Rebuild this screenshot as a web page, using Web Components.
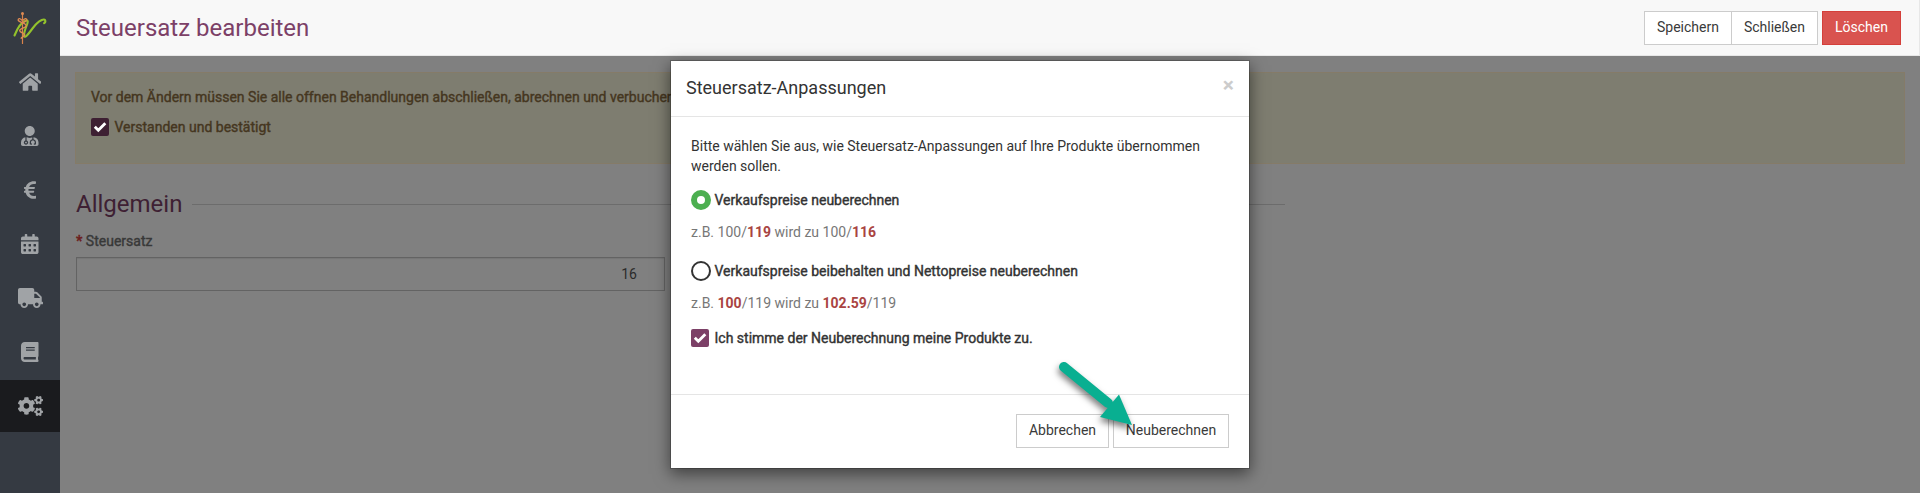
<!DOCTYPE html>
<html lang="de">
<head>
<meta charset="utf-8">
<title>Steuersatz bearbeiten</title>
<style>
html,body{margin:0;height:100%;overflow:hidden}
body{font:400 14px/20px Roboto,"Liberation Sans",sans-serif;color:#333;background:#808080}
</style>
</head>
<body>
<tax-app></tax-app>
<script>
const define = (name, html, setup) => customElements.define(name, class extends HTMLElement {
  constructor() {
    super();
    const t = document.createElement('template');
    t.innerHTML = html;
    this.attachShadow({mode: 'open'}).append(t.content.cloneNode(true));
  }
  connectedCallback() { if (setup) setup(this, this.shadowRoot); }
});

const smallGear = 'M512.1 191l-8.2 14.3c-3 5.3-9.4 7.5-15.1 5.4-11.8-4.4-22.6-10.7-32.1-18.6-4.6-3.8-5.8-10.5-2.8-15.7l8.2-14.3c-6.9-8-12.3-17.3-15.9-27.4h-16.5c-6 0-11.2-4.3-12.2-10.3-2-12-2.1-24.6 0-37.1 1-6 6.2-10.4 12.2-10.4h16.5c3.6-10.1 9-19.4 15.9-27.4l-8.2-14.3c-3-5.2-1.9-11.9 2.8-15.7 9.5-7.9 20.4-14.2 32.1-18.6 5.7-2.1 12.1.1 15.1 5.4l8.2 14.3c10.5-1.9 21.2-1.9 31.7 0L552 6.3c3-5.3 9.4-7.5 15.1-5.4 11.8 4.4 22.6 10.7 32.1 18.6 4.6 3.8 5.8 10.5 2.8 15.7l-8.2 14.3c6.9 8 12.3 17.3 15.9 27.4h16.5c6 0 11.2 4.3 12.2 10.3 2 12 2.1 24.6 0 37.1-1 6-6.2 10.4-12.2 10.4h-16.5c-3.6 10.1-9 19.4-15.9 27.4l8.2 14.3c3 5.2 1.9 11.9-2.8 15.7-9.5 7.9-20.4 14.2-32.1 18.6-5.7 2.1-12.1-.1-15.1-5.4l-8.2-14.3c-10.4 1.9-21.2 1.9-31.7 0zm-10.5-58.8c38.5 29.6 82.4-14.3 52.8-52.8-38.5-29.7-82.4 14.3-52.8 52.8z';
const day = (x, y) => `M${x} ${y+12}c0-6.6 5.4-12 12-12h40c6.6 0 12 5.4 12 12v40c0 6.6-5.4 12-12 12h-40c-6.6 0-12-5.4-12-12z`;
const icons = {
  home: [576, '<path d="M280.37 148.26L96 300.11V464a16 16 0 0 0 16 16l112.06-.29a16 16 0 0 0 15.92-16V368a16 16 0 0 1 16-16h64a16 16 0 0 1 16 16v95.64a16 16 0 0 0 16 16.05L464 480a16 16 0 0 0 16-16V300L295.67 148.26a12.19 12.19 0 0 0-15.3 0zM571.6 251.47L488 182.56V44.05a12 12 0 0 0-12-12h-56a12 12 0 0 0-12 12v72.61L318.47 43a48 48 0 0 0-61 0L4.34 251.47a12 12 0 0 0-1.6 16.9l25.5 31A12 12 0 0 0 45.15 301l235.22-193.74a12.19 12.19 0 0 1 15.3 0L530.9 301a12 12 0 0 0 16.9-1.6l25.5-31a12 12 0 0 0-1.7-16.93z"/>'],
  doctor: [448, '<path d="M224 256c70.7 0 128-57.3 128-128S294.7 0 224 0 96 57.3 96 128s57.3 128 128 128zM104 424c0 13.3 10.7 24 24 24s24-10.7 24-24-10.7-24-24-24-24 10.7-24 24zm216-135.4v49c36.5 7.4 64 39.8 64 78.4v41.7c0 7.6-5.4 14.2-12.9 15.7l-32.2 6.4c-4.3.9-8.5-1.9-9.4-6.3l-3.1-15.7c-.9-4.3 1.9-8.6 6.3-9.4l19.3-3.9V416c0-62.8-96-65.1-96 1.9v26.7l19.3 3.9c4.3.9 7.1 5.1 6.3 9.4l-3.1 15.7c-.9 4.3-5.1 7.1-9.4 6.3l-31.2-4.2c-7.9-1.1-13.8-7.8-13.8-15.9V416c0-38.6 27.5-70.9 64-78.4v-45.2c-2.2.7-4.4 1.1-6.6 1.9-18 6.3-37.3 9.8-57.4 9.8s-39.4-3.5-57.4-9.8c-7.4-2.6-14.9-4.2-22.6-5.2v81.6c23.1 6.9 40 28.1 40 53.4 0 30.9-25.1 56-56 56s-56-25.1-56-56c0-25.3 16.9-46.5 40-53.4v-80.4C48.5 301 0 355.8 0 422.4v44.8C0 491.9 20.1 512 44.8 512h358.4c24.7 0 44.8-20.1 44.8-44.8v-44.8c0-72-56.8-130.3-128-133.8z"/>'],
  euro: [320, '<path d="M310.706 413.765c-1.314-6.63-7.835-10.872-14.424-9.369-10.692 2.439-27.422 5.413-45.426 5.413-56.763 0-101.929-34.79-121.461-85.449h113.689a12 12 0 0 0 11.708-9.369l6.373-28.36c1.686-7.502-4.019-14.631-11.708-14.631H115.22c-1.21-14.328-1.414-28.287.137-42.245H261.95a12 12 0 0 0 11.723-9.434l6.512-29.755c1.638-7.484-4.061-14.566-11.723-14.566H130.184c20.633-44.991 62.69-75.03 117.619-75.03 14.486 0 28.564 2.25 37.851 4.145 6.216 1.268 12.347-2.498 14.002-8.623l11.991-44.368c1.822-6.741-2.465-13.616-9.326-14.917C290.217 34.912 270.71 32 249.635 32 152.451 32 74.03 92.252 45.075 176H12c-6.627 0-12 5.373-12 12v29.755c0 6.627 5.373 12 12 12h21.569c-1.009 13.607-1.181 29.287-.181 42.245H12c-6.627 0-12 5.373-12 12v28.36c0 6.627 5.373 12 12 12h30.114C67.139 414.692 145.264 480 249.635 480c26.301 0 48.562-4.544 61.101-7.788 6.167-1.595 10.027-7.708 8.788-13.957l-8.818-44.49z"/>'],
  calendar: [448, `<path fill-rule="evenodd" d="M0 464c0 26.5 21.5 48 48 48h352c26.5 0 48-21.5 48-48V192H0zM400 64h-48V16c0-8.8-7.2-16-16-16h-32c-8.8 0-16 7.2-16 16v48H160V16c0-8.8-7.2-16-16-16h-32c-8.8 0-16 7.2-16 16v48H48C21.5 64 0 85.5 0 112v48h448v-48c0-26.5-21.5-48-48-48z${[64,192,320].map(x => day(x,256)+day(x,384)).join('')}"/>`],
  truck: [640, '<path d="M624 352h-16V243.9c0-12.7-5.1-24.9-14.1-33.9L494 110.1c-9-9-21.2-14.1-33.9-14.1H416V48c0-26.5-21.5-48-48-48H48C21.5 0 0 21.5 0 48v320c0 26.5 21.5 48 48 48h16c0 53 43 96 96 96s96-43 96-96h128c0 53 43 96 96 96s96-43 96-96h48c8.8 0 16-7.2 16-16v-32c0-8.8-7.2-16-16-16zM160 464c-26.5 0-48-21.5-48-48s21.5-48 48-48 48 21.5 48 48-21.5 48-48 48zm320 0c-26.5 0-48-21.5-48-48s21.5-48 48-48 48 21.5 48 48-21.5 48-48 48zm80-208H416V144h44.1l99.9 99.9V256z"/>'],
  book: [448, '<path d="M448 360V24c0-13.3-10.7-24-24-24H96C43 0 0 43 0 96v320c0 53 43 96 96 96h328c13.3 0 24-10.7 24-24v-16c0-7.5-3.5-14.3-8.9-18.7-4.2-15.4-4.2-59.3 0-74.7 5.4-4.3 8.9-11.1 8.9-18.6zM128 134c0-3.3 2.7-6 6-6h212c3.3 0 6 2.7 6 6v20c0 3.3-2.7 6-6 6H134c-3.3 0-6-2.7-6-6v-20zm0 64c0-3.3 2.7-6 6-6h212c3.3 0 6 2.7 6 6v20c0 3.3-2.7 6-6 6H134c-3.3 0-6-2.7-6-6v-20zm253.4 250H96c-17.7 0-32-14.3-32-32 0-17.6 14.4-32 32-32h285.4c-1.9 17.1-1.9 46.9 0 64z"/>'],
  cogs: [640, `<path d="M386.3 286.1l33.7 16.8c10.1 5.8 14.5 18.1 10.5 29.1-8.9 24.2-26.4 46.4-42.6 65.8-7.4 8.9-20.2 11.1-30.3 5.3l-29.1-16.8c-16 13.7-34.6 24.6-54.9 31.7v33.6c0 11.6-8.3 21.6-19.7 23.6-24.6 4.2-50.4 4.4-75.9 0-11.5-2-20-11.9-20-23.6V418c-20.3-7.2-38.9-18-54.9-31.7L74 403c-10 5.8-22.9 3.6-30.3-5.3-16.2-19.4-33.3-41.6-42.2-65.7-4-10.9.4-23.2 10.5-29.1l33.3-16.8c-3.9-20.9-3.9-42.4 0-63.4L12 205.8c-10.1-5.8-14.6-18.1-10.5-29 8.9-24.2 26-46.4 42.2-65.8 7.4-8.9 20.2-11.1 30.3-5.3l29.1 16.8c16-13.7 34.6-24.6 54.9-31.7V57.1c0-11.5 8.2-21.5 19.6-23.5 24.6-4.2 50.5-4.4 76-.1 11.5 2 20 11.9 20 23.6v33.6c20.3 7.2 38.9 18 54.9 31.7l29.1-16.8c10-5.8 22.9-3.6 30.3 5.3 16.2 19.4 33.2 41.6 42.1 65.8 4 10.9.1 23.2-10 29.1l-33.7 16.8c3.9 21 3.9 42.5 0 63.5zm-117.6 21.1c59.2-77-28.7-164.9-105.7-105.7-59.2 77 28.7 164.9 105.7 105.7z"/><path d="${smallGear}"/><path transform="translate(0 298.6)" d="${smallGear}"/>`]
};

define('nav-item', `<style>
:host{display:flex;height:52px;align-items:center;justify-content:center;color:#a0a3a6}
:host([active]){background:#1a1b1e}
svg{height:20px;fill:currentColor;display:block}
</style><svg></svg>`, (el, root) => {
  const [w, body] = icons[el.getAttribute('icon')];
  const svg = root.querySelector('svg');
  svg.setAttribute('viewBox', `0 0 ${w} 512`);
  svg.style.width = w / 25.6 + 'px';
  svg.innerHTML = body;
});

define('brand-logo', `<style>:host{display:block;height:56px}svg{display:block}</style>
<svg width="60" height="56" fill="none" stroke-linecap="round">
<path d="M14.500 35.500C17 29 21.500 22 26 20.400c2.500-.6 1.800 2 1 4.200-1.800 4.500-3.700 10-2.700 11.800 2 2 7.500-8 12.200-12.600 3.800-3.600 7.500-5.200 8.600-3.600.6 1.300.2 2.200-1 3" stroke="#93c22c" stroke-width="2.100"/>
<path d="M22.500 14v29.500" stroke="#d9824a" stroke-width="1.200"/>
<circle cx="22.500" cy="13.400" r="1.500" fill="#e08a52"/>
<path d="M21.500 20c-1.500-2.200-3.500-1.500-3.300.2.300 2.300 8 2.500 8 5.300s-6.500 2.500-6.500 5 5 2.200 5 4.300-3.500 2-3.500 3.500M23.500 20c1.500-2.200 3.500-1.500 3.300.2-.3 1.500-2.500 1.800-4.500 2.500" stroke="#e08a52" stroke-width="1.400"/>
</svg>`);

define('side-bar', `<style>
:host{display:flex;flex-direction:column;gap:2px;width:60px;flex:none;background:#353a42}
brand-logo{margin-bottom:-2px}
</style><brand-logo></brand-logo><slot></slot>`);

define('ui-button', `<style>
:host{display:flex;box-sizing:border-box;height:34px;border:1px solid #ccc;background:#fff;color:#3a3a3a;align-items:center;justify-content:center;padding-bottom:2px}
:host([danger]){background:#d9534f;border-color:#d43f3a;color:#fff}
</style><span><slot></slot></span>`);

define('page-header', `<style>
:host{display:flex;box-sizing:border-box;height:56px;background:#f8f8f8;border-bottom:1px solid #e7e7e7;border-right:1px solid #e7e7e7;padding:0 18px 0 16px;align-items:flex-start;justify-content:space-between}
h1{margin:15px 0 0;font:400 24px/26px Roboto,sans-serif;color:#7c4067}
div{display:flex;margin-top:11px}
</style><h1><slot></slot></h1><div><slot name="actions"></slot></div>`);

define('check-option', `<style>
:host{display:flex;align-items:center;gap:5.500px;height:20px;-webkit-text-stroke:.4px currentColor}
i{display:block;box-sizing:border-box;width:18px;height:18px;border-radius:2px;background:var(--box,#7c4067);flex:none}
svg{display:block;fill:none;stroke:#fff;stroke-width:2.800}
:host([radio]){gap:3.500px}
:host([radio]) i{width:20px;height:20px;border-radius:50%;border:2px solid #333;background:#fff}
:host([radio][checked]) i{border:6px solid #4caf50}
:host([radio]) svg{display:none}
</style><i><svg width="18" height="18"><path d="M3.800 8.800L7.300 12.300 14.300 5.200"/></svg></i><span><slot></slot></span>`);

define('warning-box', `<style>
:host{display:block;box-sizing:border-box;height:92px;border:1px solid #857b68;background:#7e7d70;color:#453620;padding:14px 15px;--box:#3e2033}
p{margin:0 0 10px;-webkit-text-stroke:.4px currentColor;white-space:nowrap}
</style><p><slot name="text"></slot></p><slot></slot>`);

define('form-section', `<style>
:host{display:block;width:1209px}
h2{display:flex;align-items:center;gap:10px;margin:0;height:30px;font:400 24px/30px Roboto,sans-serif;color:#3e2033}
h2:after{content:"";flex:1;height:1px;background:#6c6c6c;margin-top:1px}
</style><h2><slot name="title"></slot></h2><slot></slot>`);

define('number-field', `<style>
:host{display:block;width:589px;margin-top:12px;color:#383838}
label{display:block;-webkit-text-stroke:.4px currentColor;height:20px}
b{font-weight:700;color:#6b1c1b}
div{box-sizing:border-box;height:34px;margin-top:6px;border:1px solid #636363;padding:6px 27px 6px 12px;text-align:right;color:#2b2b2b;box-shadow:inset 0 1px 1px rgba(0,0,0,.075)}
</style><label><b>*</b> <slot name="label"></slot></label><div><slot></slot></div>`);

define('modal-dialog', `<style>
:host{position:absolute;left:670px;top:60px;box-sizing:border-box;width:580px;height:409px;display:flex;flex-direction:column;background:#fff;background-clip:padding-box;border:1px solid rgba(0,0,0,.2);box-shadow:0 5px 15px rgba(0,0,0,.5)}
header{display:flex;box-sizing:border-box;height:56px;border-bottom:1px solid #e5e5e5;padding:15px;justify-content:space-between}
h4{margin:0;font:400 18px/24px Roboto,sans-serif}
.x{font:700 21px/19px Roboto,sans-serif;color:#ccc}
main{flex:1;padding:19px 20px}
footer{display:flex;box-sizing:border-box;height:74px;border-top:1px solid #e5e5e5;padding:19px 20px;gap:4px;justify-content:flex-end}
</style><header><h4><slot name="title"></slot></h4><span class="x">×</span></header><main><slot></slot></main><footer><slot name="footer"></slot></footer>`);

define('price-example', `<style>
:host{display:block;color:#777;height:20px;margin:12px 0 19px}
::slotted(b){color:#a94442;font-weight:700}
</style><slot></slot>`);

define('pointer-arrow', `<style>
:host{position:absolute;left:1050px;top:352px;filter:drop-shadow(-1px 4px 3px rgba(0,0,0,.5))}
svg{display:block;overflow:visible}
</style><svg width="90" height="80"><path d="M14 15L58 51" stroke="#09af91" stroke-width="10" stroke-linecap="round"/><path d="M69 42.500L82 73 50 65z" fill="#09af91"/></svg>`);

define('tax-app', `<style>
:host{display:flex;position:relative;height:493px;overflow:hidden}
.page{flex:1;display:flex;flex-direction:column}
warning-box{margin:16px 15px 0}
form-section{margin:25px 0 0 16px}
.intro{margin:0 0 14px;white-space:nowrap}
.save{width:88px}.close{width:87px;margin-left:-1px}.del{width:79px;margin-left:4px}
.cancel{width:93px}.calc{width:116px}
</style>
<side-bar>
<nav-item icon="home"></nav-item><nav-item icon="doctor"></nav-item><nav-item icon="euro"></nav-item><nav-item icon="calendar"></nav-item><nav-item icon="truck"></nav-item><nav-item icon="book"></nav-item><nav-item icon="cogs" active></nav-item>
</side-bar>
<div class="page">
<page-header>Steuersatz bearbeiten<ui-button class="save" slot="actions">Speichern</ui-button><ui-button class="close" slot="actions">Schließen</ui-button><ui-button class="del" slot="actions" danger>Löschen</ui-button></page-header>
<warning-box><span slot="text">Vor dem Ändern müssen Sie alle offnen Behandlungen abschließen, abrechnen und verbuchen</span><check-option checked>Verstanden und bestätigt</check-option></warning-box>
<form-section><span slot="title">Allgemein</span><number-field><span slot="label">Steuersatz</span>16</number-field></form-section>
</div>
<modal-dialog><span slot="title">Steuersatz-Anpassungen</span>
<p class="intro">Bitte wählen Sie aus, wie Steuersatz-Anpassungen auf Ihre Produkte übernommen<br>werden sollen.</p>
<check-option radio checked>Verkaufspreise neuberechnen</check-option>
<price-example>z.B. 100/<b>119</b> wird zu 100/<b>116</b></price-example>
<check-option radio>Verkaufspreise beibehalten und Nettopreise neuberechnen</check-option>
<price-example style="margin-bottom:15px">z.B. <b>100</b>/119 wird zu <b>102.59</b>/119</price-example>
<check-option checked>Ich stimme der Neuberechnung meine Produkte zu.</check-option>
<ui-button class="cancel" slot="footer">Abbrechen</ui-button><ui-button class="calc" slot="footer">Neuberechnen</ui-button>
</modal-dialog>
<pointer-arrow></pointer-arrow>`);
</script>
</body>
</html>
